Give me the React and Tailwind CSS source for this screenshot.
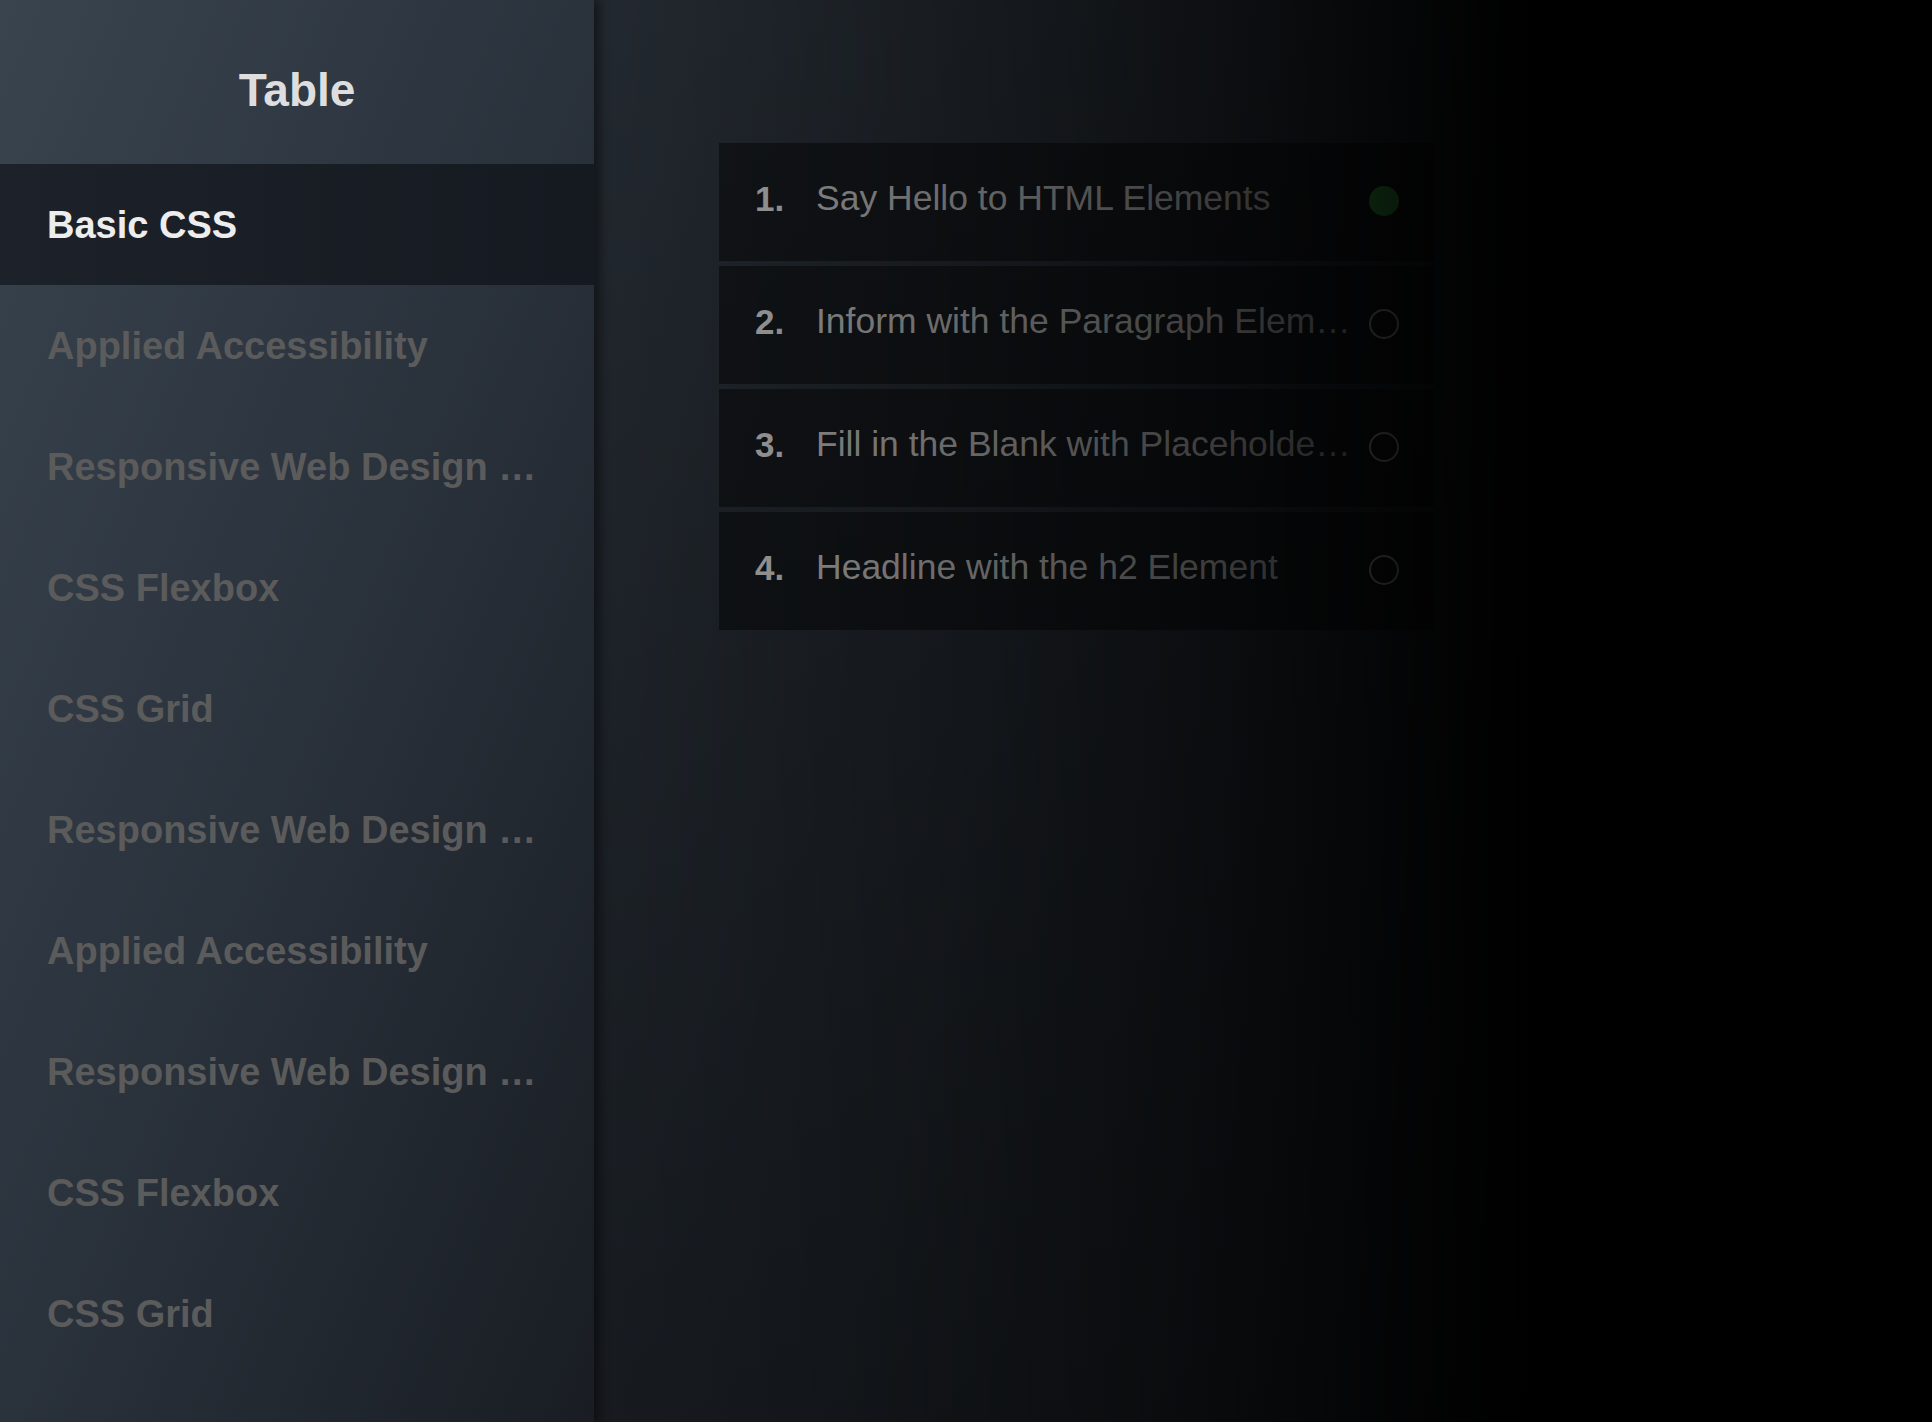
const sections = [
  'Basic CSS',
  'Applied Accessibility',
  'Responsive Web Design …',
  'CSS Flexbox',
  'CSS Grid',
  'Responsive Web Design …',
  'Applied Accessibility',
  'Responsive Web Design …',
  'CSS Flexbox',
  'CSS Grid',
]

const lessons = [
  { title: 'Say Hello to HTML Elements', done: true },
  { title: 'Inform with the Paragraph Elem…', done: false },
  { title: 'Fill in the Blank with Placeholde…', done: false },
  { title: 'Headline with the h2 Element', done: false },
]

export default function App() {
  return (
    <div className="flex h-screen w-full overflow-hidden bg-black font-['Liberation_Sans',Arial,sans-serif]">
      {/* sidebar */}
      <aside className="relative z-10 flex w-[594px] shrink-0 flex-col bg-gradient-to-br from-[#39444f] via-[#2a323c] to-[#191d23] shadow-[6px_0_10px_rgba(0,0,0,0.45)]">
        <div className="flex h-[164px] shrink-0 items-center justify-center pt-[16px]">
          <h1 className="text-[46px] font-bold text-[#dedede]">Table</h1>
        </div>
        {sections.map((name, i) => (
          <div
            key={i}
            className={
              i === 0
                ? 'flex h-[121px] shrink-0 items-center bg-gradient-to-r from-[#1d222a] to-[#151920] px-[47px] pt-[2px]'
                : 'flex h-[121px] shrink-0 items-center px-[47px] pt-[2px]'
            }
          >
            <span
              className={
                i === 0
                  ? 'truncate text-[38px] font-bold text-[#ededed]'
                  : 'truncate text-[38px] font-bold text-[#5b5b5b]'
              }
            >
              {name}
            </span>
          </div>
        ))}
      </aside>

      {/* lesson list */}
      <main className="relative flex-1 bg-gradient-to-b from-[#232930] to-[#171b20]">
        <div className="ml-[125px] mt-[143px] flex w-[715px] flex-col gap-[5px]">
          {lessons.map((l, i) => (
            <div key={i} className="flex h-[118px] items-center bg-black/45 pb-[6px] pl-[36px] pr-[35px]">
              <span className="w-[61px] shrink-0 text-[35px] font-bold text-[#a8a8a8]">{i + 1}.</span>
              <span className="flex-1 truncate text-[35.5px] text-[#9c9c9c]">{l.title}</span>
              {l.done ? (
                <span className="ml-2 mt-[4px] h-[30px] w-[30px] shrink-0 rounded-full bg-[#37ad42]" />
              ) : (
                <span className="ml-2 mt-[4px] h-[30px] w-[30px] shrink-0 rounded-full border-2 border-[#b0b0b0]" />
              )}
            </div>
          ))}
        </div>
        {/* dimming overlay fading to black on the right */}
        <div className="pointer-events-none absolute inset-0 bg-[linear-gradient(to_right,rgba(0,0,0,0)_0%,rgba(0,0,0,0.3)_25%,rgba(0,0,0,0.6)_45%,rgba(0,0,0,0.85)_60%,rgba(0,0,0,1)_70%,rgba(0,0,0,1)_100%)]" />
      </main>
    </div>
  )
}
